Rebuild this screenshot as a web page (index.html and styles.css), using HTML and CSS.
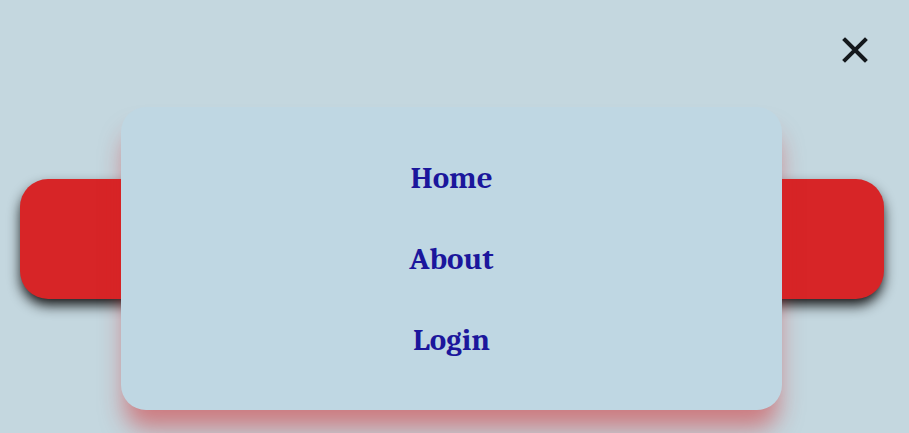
FILE: index.html
```html
<!DOCTYPE html>
<html lang="en">
<head>
<meta charset="utf-8">
<meta name="viewport" content="width=device-width, initial-scale=1">
<title>Menu</title>
<link rel="stylesheet" href="styles.css">
</head>
<body>
<header class="topbar">
  <button class="close" type="button" aria-label="Close menu">
    <svg class="close-icon" viewBox="0 0 26 26" aria-hidden="true"><path d="M3 3L23 23M23 3L3 23"/></svg>
  </button>
</header>
<main class="stage">
  <div class="banner"></div>
  <nav class="menu">
    <a class="menu-link" href="#home">Home</a>
    <a class="menu-link" href="#about">About</a>
    <a class="menu-link" href="#login">Login</a>
  </nav>
</main>
</body>
</html>
```
FILE: styles.css
```css
* {
  box-sizing: border-box;
}

body {
  margin: 0;
  min-height: 100vh;
  overflow: hidden;
  background: #c4d7df;
  font-family: Cambria, "Droid Serif", "Noto Serif", "DejaVu Serif Condensed", "DejaVu Serif", serif;
}

.topbar {
  display: flex;
  justify-content: flex-end;
  padding: 37px 41px 0 0;
}

.close {
  display: flex;
  padding: 0;
  border: 0;
  background: none;
  cursor: pointer;
}

.close-icon {
  width: 26px;
  height: 26px;
  fill: none;
  stroke: #14181c;
  stroke-width: 4;
  stroke-linecap: square;
}

/* The banner sits behind the menu, in the same grid cell. */
.stage {
  display: grid;
  align-items: start;
  padding: 44px 25px 0 20px;
}

.banner {
  grid-area: 1 / 1;
  height: 120px;
  margin-top: 72px;
  border-radius: 28px;
  background: #d72527;
  box-shadow: 0 7px 13px -1px #111;
}

.menu {
  grid-area: 1 / 1;
  display: flex;
  flex-direction: column;
  align-items: center;
  gap: 41px;
  margin: 0 102px 0 101px;
  padding: 51px 20px 50px;
  border-radius: 25px;
  background: #bfd7e3;
  box-shadow: 0 22px 25px -4px rgba(215, 32, 34, 0.5);
}

.menu-link {
  color: #1b169c;
  font-size: 31px;
  font-weight: 700;
  line-height: 40px;
  text-decoration: none;
}
```
